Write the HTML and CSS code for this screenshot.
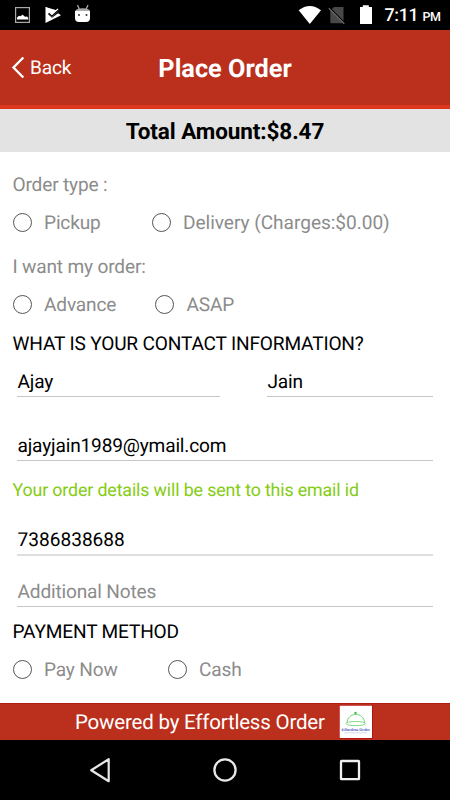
FILE: index.html
```
<!DOCTYPE html>
<html lang="en">
<head>
<meta charset="utf-8">
<title>Place Order</title>
<link rel="stylesheet" href="styles.css">
</head>
<body>
<div class="screen">
  <div class="status">
    <svg class="status-icons" width="100" height="30" viewBox="0 0 100 30">
      <rect x="15.6" y="7.6" width="13.8" height="14.8" fill="none" stroke="#aaa" stroke-width="1.2"/>
      <path d="M17 19.5v-2l2-1.8 1.3.5 2.4-1.4 2.3 2 2-.3 1.2 1.2v1.8z" fill="#fff"/>
      <path d="M45.5 7v16L61 15.200l-3-2-6 4.600-3.900-3.600 1.900-1.900 2 2 4.500-4z" fill="#fff"/>
      <path d="M45.500 7l9 4 3.200-2.400 1.300 1.900-7 6.600-3.200-3" fill="#fff"/>
      <path d="M48.700 13.300l3.200 2.900 7-6.400" fill="none" stroke="#000" stroke-width="1.200"/>
      <path d="M77.5 5l2 4.5M88 5l-2 4.5" stroke="#aaa" stroke-width="1.3"/>
      <path d="M75.3 11q1-2.7 7.4-2.7T90 11z" fill="#aaa"/>
      <path d="M75 11h15v7q0 4-4 4h-7q-4 0-4-4z" fill="#fff"/>
      <circle cx="79" cy="15" r="1" fill="#333"/><circle cx="86.5" cy="15" r="1" fill="#333"/>
    </svg>
    <svg class="status-icons" width="75" height="30" viewBox="297 0 75 30">
      <path d="M298.7 10.3Q309.8 1.5 321 10.3L309.8 24z" fill="#fff"/>
      <path d="M334 7h9.5v15.6q0 .6-.7.6h-11.2q-1.3 0-1.3-1.3V10.7z" fill="#484848"/>
      <path d="M329.300 7.500l15.700 15.700" stroke="#000" stroke-width="1.500"/>
      <path d="M328.800 8.300l15.500 15.500" stroke="#666" stroke-width="1.300"/>
      <path d="M360 7h2.8V5.3h6V7h3.2v17h-12z" fill="#fff"/>
    </svg>
    <div class="clock">7:11 <span class="meridiem">PM</span></div>
  </div>
  <header class="header">
    <div class="back">
      <svg width="14" height="24" viewBox="0 0 14 24"><path d="M12.300 1.500L2.500 11.500l9.800 10" fill="none" stroke="#fff" stroke-width="2.400"/></svg>
      <span>Back</span>
    </div>
    <h1 class="title">Place Order</h1>
  </header>
  <div class="total"><span>Total Amount:$8.47</span></div>
  <main class="form">
    <div class="label label-first">Order type :</div>
    <div class="options">
      <label class="option option-pickup"><i class="radio"></i><span>Pickup</span></label>
      <label class="option option-delivery"><i class="radio"></i><span>Delivery (Charges:$0.00)</span></label>
    </div>
    <div class="label label-when">I want my order:</div>
    <div class="options">
      <label class="option option-advance"><i class="radio"></i><span>Advance</span></label>
      <label class="option"><i class="radio"></i><span>ASAP</span></label>
    </div>
    <h2 class="section section-contact"><span>WHAT IS YOUR CONTACT INFORMATION?</span></h2>
    <div class="names">
      <div class="field"><span>Ajay</span></div>
      <div class="field"><span>Jain</span></div>
    </div>
    <div class="field email"><span>ajayjain1989@ymail.com</span></div>
    <p class="hint"><span>Your order details will be sent to this email id</span></p>
    <div class="field phone"><span>7386838688</span></div>
    <div class="field notes"><span>Additional Notes</span></div>
    <h2 class="section section-payment"><span>PAYMENT METHOD</span></h2>
    <div class="options options-payment">
      <label class="option option-paynow"><i class="radio"></i><span>Pay Now</span></label>
      <label class="option"><i class="radio"></i><span>Cash</span></label>
    </div>
  </main>
  <footer class="powered">
    <span class="powered-text">Powered by Effortless Order</span>
    <svg class="logo" width="34" height="34" viewBox="0 0 34 34">
      <rect width="34" height="34" fill="#b8100c"/>
      <rect x=".7" y=".7" width="32.300" height="32.300" fill="#fff"/>
      <circle cx="16.500" cy="8" r="1.200" fill="#32bd3c"/>
      <path d="M8 18C8.500 6.500 25 6.500 25.500 18" fill="none" stroke="#70d578" stroke-width="1"/>
      <ellipse cx="16.700" cy="18.600" rx="9.800" ry="2.100" fill="none" stroke="#70d578" stroke-width=".9"/>
      <text x="2.500" y="26.300" class="logo-text" textLength="28.500" lengthAdjust="spacingAndGlyphs">Effortless Order</text>
      <path d="M5 27.800h23" stroke="#a9b6e0" stroke-width=".5"/>
    </svg>
  </footer>
  <nav class="nav">
    <svg width="24" height="26" viewBox="0 0 24 26"><path d="M20.700 2.200v22L3.200 13.200z" fill="none" stroke="#e8e8e8" stroke-width="2.200" stroke-linejoin="round"/></svg>
    <svg width="26" height="26" viewBox="0 0 26 26"><circle cx="13" cy="13" r="10.600" fill="none" stroke="#e8e8e8" stroke-width="2.300"/></svg>
    <svg width="24" height="26" viewBox="0 0 24 26"><rect x="3" y="4" width="18" height="18.200" rx=".5" fill="none" stroke="#f0f0f0" stroke-width="2.300"/></svg>
  </nav>
</div>
</body>
</html>
```
FILE: styles.css
```
* { box-sizing: border-box; }
body { margin: 0; font-family: Roboto, "Liberation Sans", sans-serif; font-size: 19.100px; letter-spacing: -.17px; background: #fff; text-rendering: geometricPrecision; }
h1, h2, p { margin: 0; font-weight: 400; }
.screen { width: 450px; height: 800px; display: flex; flex-direction: column; overflow: hidden; }
.status { height: 30px; flex: none; background: #000; display: flex; color: #fff; }
.status-icons:nth-child(2) { margin-left: 197px; }
.clock { margin-left: 12.500px; font-size: 17.800px; line-height: 32px; font-weight: 500; white-space: nowrap; letter-spacing: -.3px; }
.meridiem { font-size: 12.500px; margin-left: 0; }
.header { height: 79px; flex: none; background: #bb2f1d; border-bottom: 4px solid #de3820; color: #fff; display: grid; grid-template-columns: 110px 230px 110px; align-items: center; }
.back { display: flex; align-items: center; gap: 5px; padding-left: 11px; line-height: 24px; }
.back span { padding-top: 1px; }
.title { font-size: 25.300px; font-weight: 700; text-align: center; line-height: 30px; padding-top: 5px; letter-spacing: 0; }
.total { height: 43px; flex: none; background: #e3e3e3; font-size: 22.500px; font-weight: 700; line-height: 47px; text-align: center; letter-spacing: -.1px; }
.form { height: 551px; flex: none; padding: 0 17px 0 12.500px; color: #000; line-height: 26px; white-space: nowrap; }
.label { height: 24px; color: #8c8c8c; }
.label-first { margin-top: 20px; }
.label-when { margin-top: 20px; }
.options { display: flex; height: 24px; margin-top: 14px; color: #8c8c8c; }
.option { display: flex; height: 24px; gap: 12.500px; }
.radio { width: 19px; height: 19px; margin-top: 2.500px; border: 1px solid #555; border-radius: 50%; flex: none; }
.option-pickup { width: 139px; }
.option-delivery { letter-spacing: -.04px; }
.option-advance { width: 142.500px; }
.option-paynow { width: 155px; }
.section { font-size: 19.100px; height: 24px; line-height: 27px; }
.section-contact { margin-top: 14px; }
.names { display: grid; grid-template-columns: 203px 166px; gap: 47px; margin-left: 4.500px; margin-top: 15px; }
.field { height: 28px; border-bottom: 1px solid #c6c6c6; }
.field span { padding-left: .5px; }
.email, .phone, .notes { margin-left: 4.500px; }
.email { margin-top: 36px; }
.hint { height: 24px; margin-top: 17px; font-size: 17.800px; color: #84cc12; letter-spacing: -.13px; }
.phone { margin-top: 25px; height: 29px; border-bottom: 2px solid #dedede; letter-spacing: 0; }
.notes { margin-top: 23px; color: #8c8c8c; }
.section-payment { margin-top: 12px; line-height: 26px; }
.powered { height: 37px; flex: none; background: #bb2f1d; border-top: 1px solid #b51d13; color: #fff; display: flex; padding-left: 75px; line-height: 38px; font-size: 20.500px; letter-spacing: -.2px; }
.powered-text { width: 264px; white-space: nowrap; }
.logo { margin-top: 1px; }
.logo-text { font-family: "Liberation Serif", serif; font-size: 4px; font-weight: 700; fill: #3445b5; letter-spacing: 0; }
.nav { height: 60px; flex: none; background: #000; display: flex; justify-content: space-between; align-items: center; padding: 0 88px; }
```
